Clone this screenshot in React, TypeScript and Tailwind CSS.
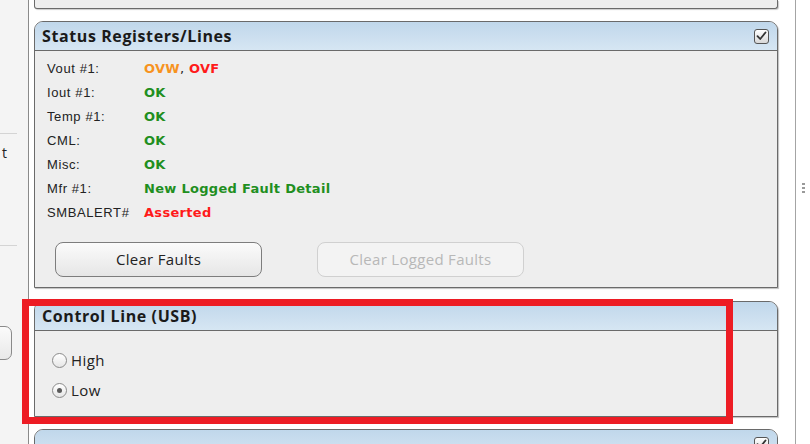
import React from 'react';

const statusRows: { label: string; value: React.ReactNode }[] = [
  {
    label: 'Vout #1:',
    value: (
      <>
        <span className="text-[#f7931e]">OVW</span>
        <span className="text-[#222] font-normal">, </span>
        <span className="text-[#ff1a1a]">OVF</span>
      </>
    ),
  },
  { label: 'Iout #1:', value: <span className="text-[#1f8f1f]">OK</span> },
  { label: 'Temp #1:', value: <span className="text-[#1f8f1f]">OK</span> },
  { label: 'CML:', value: <span className="text-[#1f8f1f]">OK</span> },
  { label: 'Misc:', value: <span className="text-[#1f8f1f]">OK</span> },
  { label: 'Mfr #1:', value: <span className="text-[#1f8f1f]">New Logged Fault Detail</span> },
  { label: 'SMBALERT#', value: <span className="text-[#ff1a1a]">Asserted</span> },
];

const HeaderCheck = () => (
  <div className="w-[15px] h-[15px] rounded-[3px] border border-[#555] bg-gradient-to-b from-white to-[#d8d8d8] flex items-center justify-center">
    <svg width="11" height="10" viewBox="0 0 11 10">
      <path d="M1.5 5.2 L4.2 8 L9.5 1.5" fill="none" stroke="#333" strokeWidth="1.8" strokeLinecap="round" strokeLinejoin="round" />
    </svg>
  </div>
);

const PanelHeader = ({ title, checkbox }: { title?: string; checkbox?: boolean }) => (
  <div className="h-[29px] shrink-0 flex items-center justify-between pl-[7px] pr-[8px] rounded-t-[8px] bg-gradient-to-b from-[#c0d7eb] to-[#d6e6f3] border-b border-[#6a6a6a]">
    <span className="font-['Open_Sans'] font-bold text-[16px] text-[#1a1a1a] tracking-[0.6px]">{title}</span>
    {checkbox && <HeaderCheck />}
  </div>
);

const Radio = ({ label, checked }: { label: string; checked?: boolean }) => (
  <div className="h-[30px] flex items-center gap-[4px] pl-[17px]">
    <div className="w-[15px] h-[15px] rounded-full border border-[#8a8a8a] bg-gradient-to-b from-white to-[#e6e6e6] flex items-center justify-center">
      {checked && <div className="w-[5px] h-[5px] rounded-full bg-[#5a5a5a]" />}
    </div>
    <span className="font-['Open_Sans'] text-[15px] text-[#222] tracking-[0.4px]">{label}</span>
  </div>
);

export default function App() {
  return (
    <div className="flex w-[810px] h-[444px] overflow-hidden bg-white font-['Liberation_Sans',sans-serif]">
      {/* left sidebar remnant */}
      <aside className="w-[28px] shrink-0 bg-[#f4f4f4] flex flex-col overflow-hidden">
        <div className="h-[133px] shrink-0" />
        <div className="h-px w-[17px] bg-[#d4d4d4]" />
        <div className="pl-[2px] mt-[11px] text-[14px] leading-[16px] text-[#222] font-['Open_Sans']">t</div>
        <div className="h-[84px] shrink-0" />
        <div className="h-px w-[17px] bg-[#d4d4d4]" />
        <div className="h-[80px] shrink-0" />
        <div className="-ml-[20px] w-[32px] h-[34px] shrink-0 rounded-[7px] border border-[#8a8a8a] bg-gradient-to-b from-[#fbfbfb] to-[#e9e9e9]" />
      </aside>
      <div className="w-px shrink-0 bg-[#8a8a8a]" />

      <main className="w-[766px] shrink-0 pl-[5px] flex flex-col">
        {/* clipped panel above */}
        <div className="w-[744px] h-[9px] shrink-0 bg-[#eeeeee] border-x border-b border-[#6a6a6a] rounded-b-[3px] shadow-[1px_1px_1px_rgba(0,0,0,0.2)]" />

        {/* Status Registers/Lines */}
        <section className="mt-[12px] w-[744px] h-[267px] shrink-0 flex flex-col rounded-t-[9px] border border-[#6a6a6a] bg-[#eeeeee] shadow-[1px_1px_1px_rgba(0,0,0,0.25)]">
          <PanelHeader title="Status Registers/Lines" checkbox />
          <div className="pt-[6px] pl-[12px]">
            {statusRows.map((row) => (
              <div key={row.label} className="h-[24px] flex items-center">
                <span className="w-[97px] text-[13px] text-[#222] tracking-[0.6px]">{row.label}</span>
                <span className="font-['DejaVu_Sans'] font-bold text-[13px] tracking-[0.3px]">{row.value}</span>
              </div>
            ))}
          </div>
          <div className="mt-[17px] flex pl-[20px] gap-[55px]">
            <button className="w-[207px] h-[35px] rounded-[8px] border border-[#7d7d7d] bg-gradient-to-b from-[#fbfbfb] to-[#e6e6e6] font-['Open_Sans'] text-[15px] text-[#222] tracking-[0.3px]">
              Clear Faults
            </button>
            <button disabled className="w-[207px] h-[35px] rounded-[8px] border border-[#d0d0d0] bg-[#f3f3f3] font-['Open_Sans'] text-[15px] text-[#b8b8b8] tracking-[0.3px]">
              Clear Logged Faults
            </button>
          </div>
        </section>

        {/* Control Line (USB) */}
        <section className="relative mt-[13px] w-[744px] h-[116px] shrink-0 flex flex-col rounded-t-[9px] border border-[#6a6a6a] bg-[#eeeeee] shadow-[1px_1px_1px_rgba(0,0,0,0.25)]">
          <PanelHeader title="Control Line (USB)" />
          <div className="pt-[14px]">
            <Radio label="High" />
            <Radio label="Low" checked />
          </div>
          {/* highlight annotation */}
          <div className="absolute -left-[13px] -top-[3px] w-[711px] h-[125px] border-[7px] border-[#ed1c24] pointer-events-none" />
        </section>

        {/* next panel, clipped */}
        <section className="mt-[12px] w-[744px] h-[40px] shrink-0 flex flex-col rounded-t-[9px] border border-[#6a6a6a] bg-[#eeeeee]">
          <PanelHeader checkbox />
        </section>
      </main>

      <div className="w-px shrink-0 bg-[#a4a4a4]" />
      <div className="flex-1 bg-white flex flex-col">
        <div className="mt-[183px] ml-[6px] flex flex-col gap-[2px]">
          <div className="w-[3px] h-[2px] bg-[#9a9a9a]" />
          <div className="w-[3px] h-[2px] bg-[#9a9a9a]" />
          <div className="w-[3px] h-[2px] bg-[#9a9a9a]" />
        </div>
      </div>
    </div>
  );
}
